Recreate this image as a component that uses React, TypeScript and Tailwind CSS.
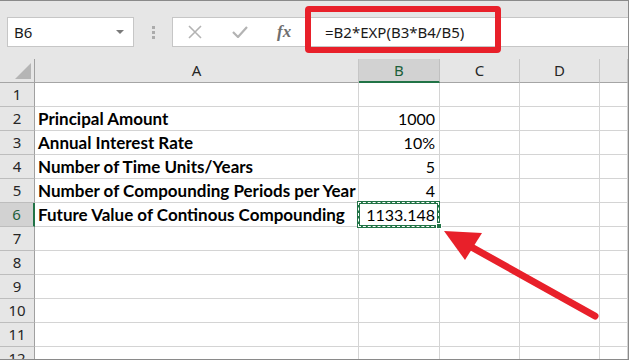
import { ReactNode } from 'react';

const ui = { fontFamily: '"Noto Sans", "Open Sans", sans-serif' };
const cellFont = { fontFamily: 'Lato, "Liberation Sans", sans-serif' };

const rows: { n: number; a?: string; b?: string }[] = [
	{ n: 1 },
	{ n: 2, a: 'Principal Amount', b: '1000' },
	{ n: 3, a: 'Annual Interest Rate', b: '10%' },
	{ n: 4, a: 'Number of Time Units/Years', b: '5' },
	{ n: 5, a: 'Number of Compounding Periods per Year', b: '4' },
	{ n: 6, a: 'Future Value of Continous Compounding', b: '1133.148' },
	{ n: 7 },
	{ n: 8 },
	{ n: 9 },
	{ n: 10 },
	{ n: 11 },
	{ n: 12 },
];

const ColHead = ({ children, active }: { children?: ReactNode; active?: boolean }) => (
	<div
		className={
			active
				? 'flex h-[24px] items-center justify-center border-r border-b-2 border-r-[#c0c0c0] border-b-[#217346] bg-[#d2d2d2] text-[15px] text-[#1d5f3a]'
				: 'flex h-[24px] items-center justify-center border-r border-b border-r-[#c6c6c6] border-b-[#a5a5a5] bg-[#e6e6e6] text-[15px] text-[#262626]'
		}
		style={ui}
	>
		{children}
	</div>
);

const RowHead = ({ n, active }: { n: number; active?: boolean }) => (
	<div
		className={
			active
				? 'flex h-[24px] items-center justify-center border-r-2 border-b border-r-[#217346] border-b-[#bdbdbd] bg-[#d2d2d2] text-[15px] text-[#1d5f3a]'
				: 'flex h-[24px] items-center justify-center border-r border-b border-r-[#a0a0a0] border-b-[#bdbdbd] bg-[#e6e6e6] text-[15px] text-[#262626]'
		}
		style={ui}
	>
		{n}
	</div>
);

const Cell = ({ children, right, bold }: { children?: ReactNode; right?: boolean; bold?: boolean }) => (
	<div
		className={`flex h-[24px] items-end overflow-visible whitespace-nowrap border-r border-b border-[#d4d4d4] pb-[1px] leading-[20px] text-black ${
			right ? 'justify-end pr-[4px] text-[16px]' : 'pl-[3px]'
		} ${bold ? 'text-[17px] font-bold' : ''}`}
		style={cellFont}
	>
		{children}
	</div>
);

const Selected = ({ children }: { children: ReactNode }) => (
	<div className="relative flex h-[24px] items-end justify-end border-r border-b border-[#d4d4d4] pr-[4px] pb-[1px] text-[16px] leading-[20px] text-black" style={cellFont}>
		{children}
		<div className="absolute -top-[2px] -left-[2px] h-[27px] w-[83px] border-[3px] border-[#217346]">
			<div className="absolute -inset-[2px] border border-dashed border-white" />
		</div>
		<div className="absolute -right-[3px] -bottom-[3px] h-[6px] w-[6px] border border-white bg-[#217346]" />
	</div>
);

export default function App() {
	return (
		<div className="relative h-[360px] w-[629px] overflow-hidden border-t border-r border-b border-[#8a8a8a] bg-white">
			{/* ribbon / formula bar */}
			<div className="flex h-[58px] items-start bg-[#e6e6e6] pt-[16px]">
				<div className="ml-[7px] flex h-[30px] w-[127px] items-center justify-between border border-[#c6c6c6] bg-white pr-[9px] pl-[6px]">
					<span className="text-[15px] text-[#1a1a1a]" style={ui}>
						B6
					</span>
					<span className="h-0 w-0 border-x-[4px] border-t-[4px] border-x-transparent border-t-[#7a7a7a]" />
				</div>
				<div className="flex h-[30px] w-[38px] flex-col items-center justify-center gap-[2px]">
					<span className="h-[3px] w-[3px] bg-[#ababab]" />
					<span className="h-[3px] w-[3px] bg-[#ababab]" />
					<span className="h-[3px] w-[3px] bg-[#ababab]" />
				</div>
				<div className="flex h-[30px] w-[134px] items-center border-y border-l border-[#c6c6c6] bg-white">
					<svg width="14" height="14" viewBox="0 0 14 14" className="ml-[15px]">
						<path d="M1 1 L13 13 M13 1 L1 13" stroke="#b3b3b3" strokeWidth="1.6" fill="none" />
					</svg>
					<svg width="16" height="12" viewBox="0 0 16 12" className="ml-[30px]">
						<path d="M1 6 L6 11 L15 1" stroke="#b3b3b3" strokeWidth="2.2" fill="none" />
					</svg>
					<span className="ml-[29px] text-[17px] font-bold italic text-[#6e6e6e]" style={{ fontFamily: '"Liberation Serif", serif' }}>
						fx
					</span>
				</div>
				<div className="flex h-[30px] flex-1 items-center border-y border-[#c6c6c6] bg-white pl-[19px] text-[15px] text-[#1a1a1a]" style={ui}>
					=B2*EXP(B3*B4/B5)
				</div>
			</div>

			{/* sheet */}
			<div className="grid grid-cols-[35px_324px_81px_80px_80px_1fr] bg-white">
				<div className="relative h-[24px] border-r border-b border-r-[#a0a0a0] border-b-[#a5a5a5] bg-[#e6e6e6]">
					<span className="absolute right-[3px] bottom-[3px] h-0 w-0 border-b-[16px] border-l-[16px] border-b-[#b5b5b5] border-l-transparent" />
				</div>
				<ColHead>A</ColHead>
				<ColHead active>B</ColHead>
				<ColHead>C</ColHead>
				<ColHead>D</ColHead>
				<ColHead />
				{rows.map((r) => (
					<div key={r.n} className="contents">
						<RowHead n={r.n} active={r.n === 6} />
						<Cell bold>{r.a}</Cell>
						{r.n === 6 ? <Selected>{r.b}</Selected> : <Cell right>{r.b}</Cell>}
						<Cell />
						<Cell />
						<Cell />
					</div>
				))}
			</div>

			{/* annotations */}
			<div className="pointer-events-none absolute top-[5px] left-[305px] h-[47px] w-[196px] rounded-[4px] border-[6px] border-[#e8202a]" />
			<svg className="pointer-events-none absolute top-0 left-0" width="629" height="360">
				<line x1="595" y1="315" x2="466" y2="243" stroke="#e8202a" strokeWidth="7" strokeLinecap="round" />
				<polygon points="444,230 482,232 465,259" fill="#e8202a" />
			</svg>
		</div>
	);
}
